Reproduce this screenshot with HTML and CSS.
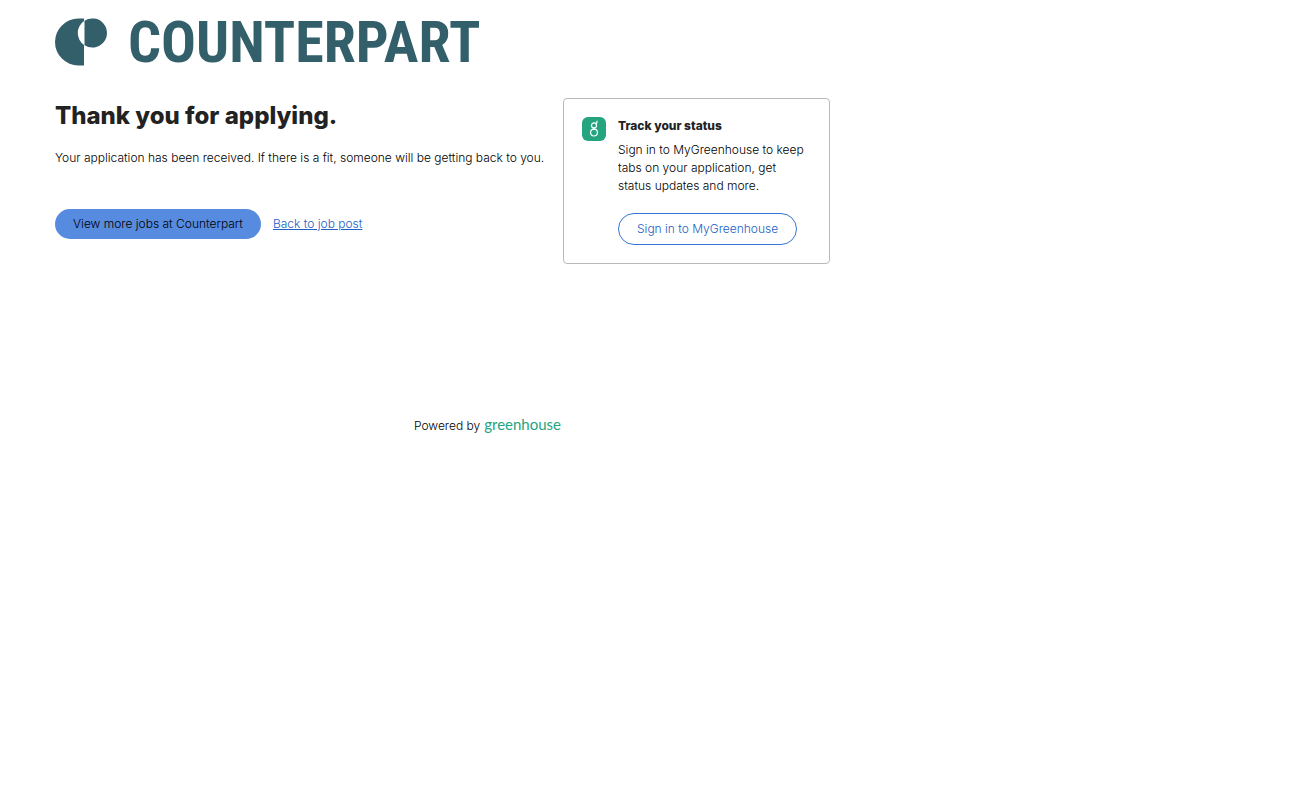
FILE: index.html
```html
<!DOCTYPE html>
<html lang="en">
<head>
<meta charset="utf-8">
<title>Thank you for applying</title>
<link rel="stylesheet" href="styles.css">
</head>
<body>
<div class="page">
  <header class="brand">
    <svg class="brand-mark" viewBox="0 0 53 48" aria-hidden="true">
      <path d="M29 .5H23.5A23.5 23.5 0 0 0 23.5 47.5H29V26.9A14.5 14.5 0 0 1 29 3.1Z"/>
      <path d="M29.5 2.7A14.6 14.6 0 1 1 29.5 27.3Z"/>
    </svg>
    <span class="brand-name">COUNTERPART</span>
  </header>
  <main class="content">
    <section class="message">
      <h1 class="title">Thank you for applying.</h1>
      <p class="text">Your application has been received. If there is a fit, someone will be getting back to you.</p>
      <div class="actions">
        <button class="button button-primary" type="button">View more jobs at Counterpart</button>
        <a class="link" href="#">Back to job post</a>
      </div>
    </section>
    <aside class="card">
      <svg class="card-icon" viewBox="0 0 24 24" aria-hidden="true">
        <rect class="icon-tile" width="24" height="24" rx="6"/>
        <g class="icon-lines">
          <circle cx="12" cy="8.4" r="2.5"/>
          <circle cx="12" cy="15.6" r="3.4"/>
          <path d="M12 11V12.2M13.7 6.6Q15.2 6.2 15.1 4.2"/>
        </g>
      </svg>
      <div class="card-body">
        <h2 class="card-title">Track your status</h2>
        <p class="card-text">Sign in to MyGreenhouse to keep tabs on your application, get status updates and more.</p>
        <button class="button button-outline" type="button">Sign in to MyGreenhouse</button>
      </div>
    </aside>
  </main>
  <footer class="footer">
    <span>Powered by</span>
    <a class="greenhouse" href="#">greenhouse</a>
  </footer>
</div>
</body>
</html>
```
FILE: styles.css
```css
* { box-sizing: border-box; }
body {
  margin: 0;
  background: #fff;
  color: #000;
  font: 300 12px/18px Inter, "Liberation Sans", sans-serif;
}
h1, h2, p { margin: 0; }
.page {
  max-width: 920px;
  padding: 16px 0 0 55px;
}
.brand {
  display: flex;
  align-items: center;
  gap: 20px;
  height: 52px;
  color: #335f6b;
}
.brand-mark {
  width: 53px;
  height: 48px;
  fill: #335f6b;
}
.brand-name {
  font: bold 58px/52px "Roboto Condensed", "Liberation Sans Narrow", "Liberation Sans", sans-serif;
}
.content {
  display: flex;
  align-items: flex-start;
  gap: 24px;
  max-width: 775px;
  margin-top: 30px;
}
.message {
  flex: 1;
  min-width: 0;
}
.title {
  color: #222;
  font-size: 24px;
  line-height: 36px;
  font-weight: 800;
}
.text {
  margin-top: 15px;
  white-space: nowrap;
}
.actions {
  display: flex;
  align-items: center;
  gap: 12px;
  margin-top: 42px;
}
.button {
  border-radius: 16px;
  font: inherit;
  cursor: pointer;
}
.button-primary {
  height: 30px;
  padding: 0 18px;
  border: 0;
  background: #578be0;
  color: #000;
}
.link { color: #2160c4; }
.card {
  display: flex;
  flex: 0 0 267px;
  gap: 12px;
  padding: 18px;
  border: 1px solid #bababa;
  border-radius: 4px;
}
.card-icon {
  flex: none;
  width: 24px;
  height: 24px;
}
.icon-tile { fill: #24a47f; }
.icon-lines {
  fill: none;
  stroke: #fff;
  stroke-width: 1.2;
  stroke-linecap: round;
}
.card-title {
  color: #222;
  font-size: 12px;
  line-height: 18px;
  font-weight: 800;
}
.card-text { margin-top: 6px; }
.button-outline {
  height: 32px;
  margin-top: 18px;
  padding: 0 18px;
  border: 1px solid #3574d6;
  background: #fff;
  color: #2160c4;
}
.footer {
  display: flex;
  justify-content: center;
  align-items: baseline;
  gap: 4px;
  margin-top: 150px;
}
.greenhouse {
  color: #24a47f;
  font: 15px/20px Lato, sans-serif;
  text-decoration: none;
}
```
